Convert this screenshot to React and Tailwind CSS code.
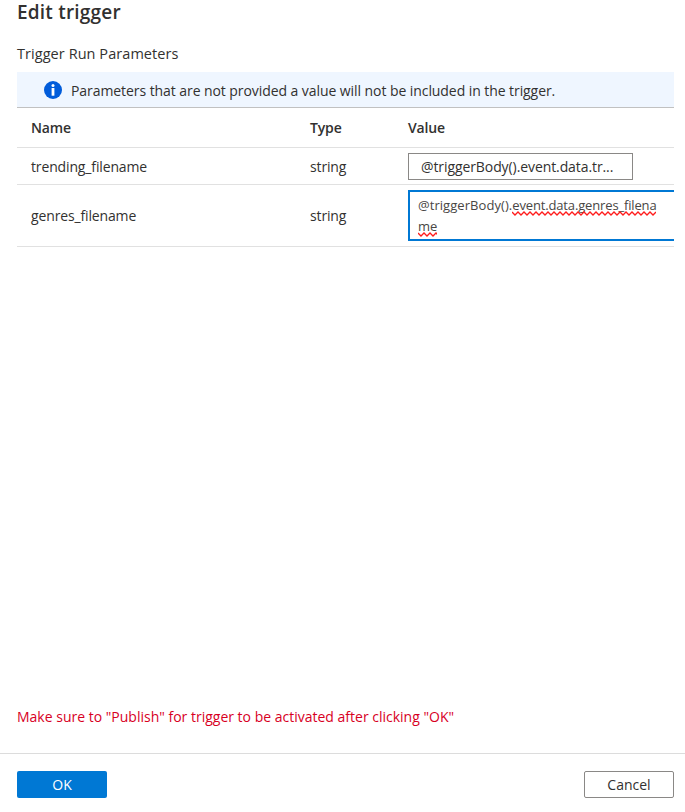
import React from "react";

function Squiggle({ width, className }) {
  const steps = Math.ceil(width / 3);
  const points = Array.from({ length: steps + 1 }, (_, i) => `${i * 3},${i % 2 ? 4 : 1}`).join(" ");
  return (
    <svg className={`absolute ${className}`} width={width} height="5" fill="none" aria-hidden="true">
      <polyline points={points} stroke="#ff1c1c" strokeWidth="1.3" />
    </svg>
  );
}

function InfoIcon() {
  return (
    <svg width="18" height="18" viewBox="0 0 18 18" aria-hidden="true">
      <circle cx="9" cy="9" r="9" fill="#015cda" />
      <circle cx="9" cy="4.4" r="1.5" fill="#fff" />
      <rect x="7.6" y="7" width="2.8" height="7.7" fill="#fff" />
    </svg>
  );
}

const row = "grid grid-cols-[279px_98px_266px] items-center border-b border-[#e1e1e1] pl-3.5 tracking-[-0.14px]";

export default function App() {
  return (
    <div className="flex h-[812px] w-[685px] flex-col overflow-hidden bg-white font-['Open_Sans','Noto_Sans',sans-serif] text-[14px] leading-5 whitespace-nowrap text-[#323130]">
      <main className="ml-[17px] flex w-[657px] grow flex-col">
        <h1 className="h-[26px] text-[19px] leading-[25px] font-semibold"><span className="tracking-[0.2px]">Edit trigger</span></h1>
        <h2 className="mt-[18px] h-7 text-[14.5px]"><span className="tracking-[0.06px]">Trigger Run Parameters</span></h2>
        <div className="flex h-9 items-center border-b border-[#c1c1c1] bg-[#eff6ff] pl-[27px]">
          <InfoIcon />
          <span className="ml-[9px] pt-0.5 tracking-[-0.07px]">Parameters that are not provided a value will not be included in the trigger.</span>
        </div>
        <div className={`${row} h-10 font-semibold`}>
          <div><span>Name</span></div>
          <div><span>Type</span></div>
          <div><span>Value</span></div>
        </div>
        <div className={`${row} h-[37px]`}>
          <div className="pt-px"><span>trending_filename</span></div>
          <div className="pt-px"><span>string</span></div>
          <div className="flex h-[27px] w-[225px] items-center border border-[#8a8886] pt-px pl-3 tracking-[-0.09px]">
            <span>@triggerBody().event.data.tr...</span>
          </div>
        </div>
        <div className={`${row} h-[62px]`}>
          <div><span>genres_filename</span></div>
          <div><span>string</span></div>
          <div className="h-[51px] border-2 border-r-0 border-[#0078d4] pt-[3px] pl-2 text-[13px] leading-[21px] tracking-[-0.15px] text-[#484644]">
            <div>
              <span className="tracking-[0.06px]">@triggerBody().</span>
              <span className="relative">event.data.genres_filena<Squiggle width={144} className="left-0 top-[15px]" /></span>
            </div>
            <div><span className="relative">me<Squiggle width={19} className="left-0 top-[15px]" /></span></div>
          </div>
        </div>
        <p className="mt-auto mb-[26px] text-[#d8001f]"><span>Make sure to "Publish" for trigger to be activated after clicking "OK"</span></p>
      </main>
      <footer className="flex h-[59px] items-start justify-between border-t border-[#dcdcdc] pt-[17px] pr-[11px] pl-[17px]">
        <button className="h-[27px] w-[90px] rounded-xs bg-[#0078d4] text-white"><span>OK</span></button>
        <button className="h-[27px] w-[90px] rounded-xs border border-[#8a8886] bg-white"><span>Cancel</span></button>
      </footer>
    </div>
  );
}
